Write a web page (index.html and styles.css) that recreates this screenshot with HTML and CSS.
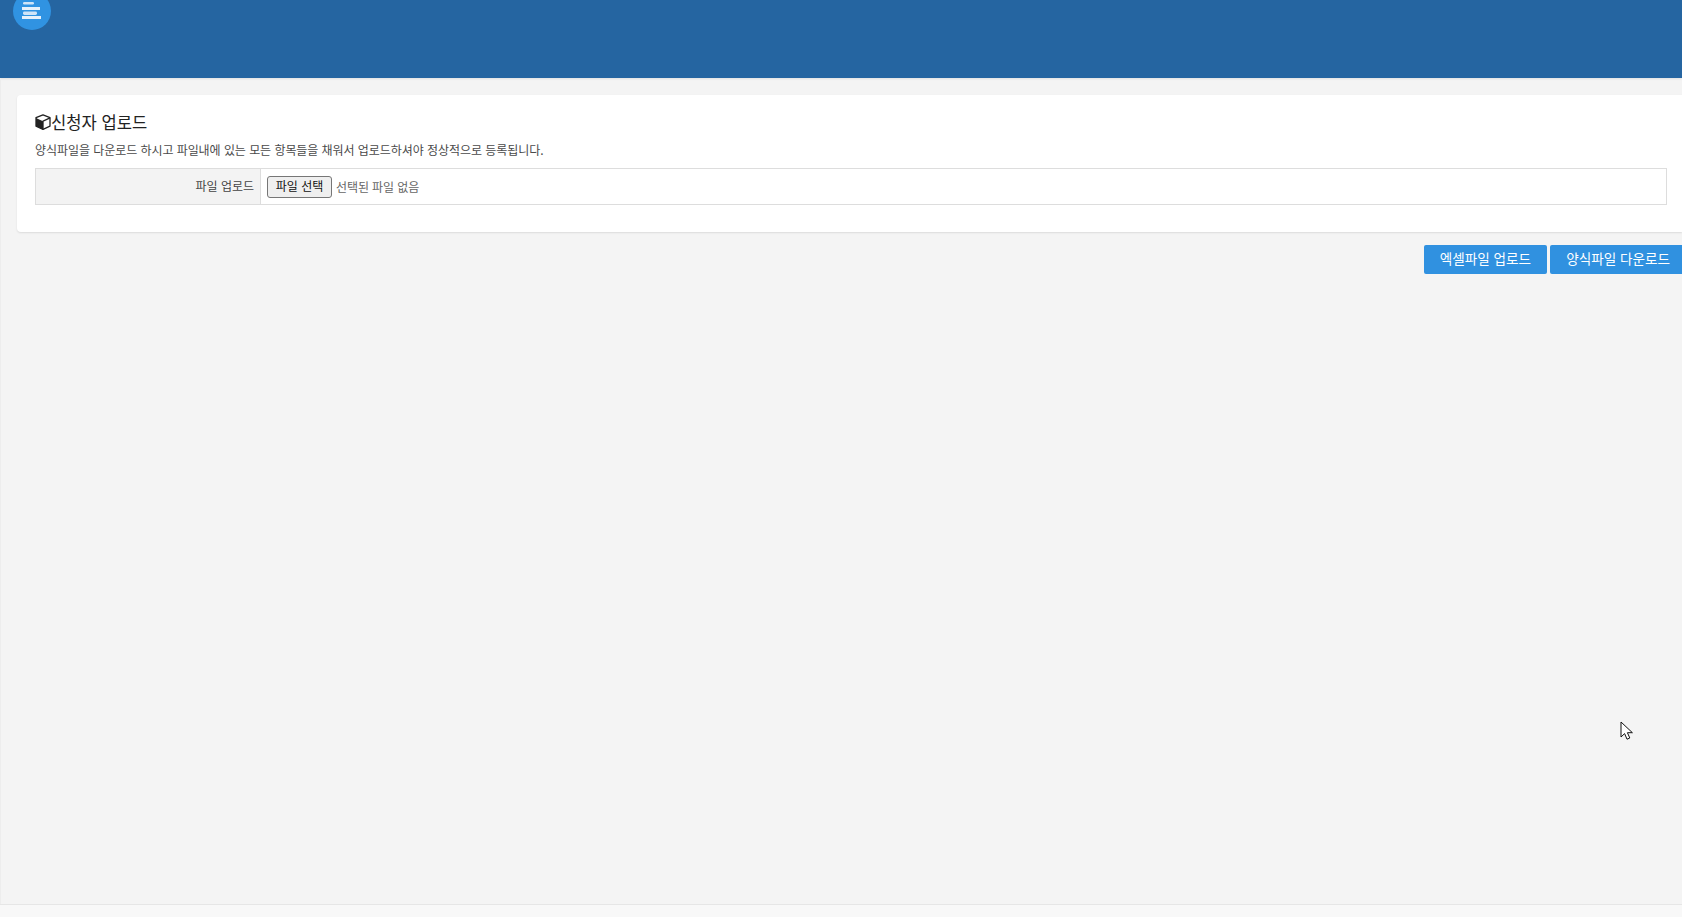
FILE: index.html
```html
<!DOCTYPE html>
<html lang="ko">
<head>
<meta charset="utf-8">
<title>신청자 업로드</title>
<link rel="stylesheet" href="styles.css">
</head>
<body>
<header class="topbar">
  <button class="menu-toggle" type="button" aria-label="메뉴">
    <svg class="menu-icon" viewBox="0 0 20 17" width="20" height="17" aria-hidden="true">
      <rect x="1" y="0" width="11" height="2.5" rx="1.2" fill="#cfe4f7"/>
      <rect x="0" y="5" width="18" height="3" fill="#e6f1fb"/>
      <rect x="1" y="9.5" width="14" height="3.5" rx="1.4" fill="#cfe4f7"/>
      <rect x="0" y="14" width="19" height="3" fill="#e6f1fb"/>
    </svg>
  </button>
</header>
<main class="content">
  <section class="card">
    <h1 class="card-title">
      <svg class="cube" viewBox="0 0 16 16" width="16" height="16" aria-hidden="true">
        <path d="M8 .8 15 3.6v8.6L8 15.4 1 12.2V3.6Z" fill="#fff" stroke="#222" stroke-width="1.3" stroke-linejoin="round"/>
        <path d="M8 7.2 1 3.9v8.3L8 15.4Z" fill="#222"/>
        <path d="M15 3.9 8 7.2v8.2" fill="none" stroke="#222" stroke-width="1.3"/>
      </svg>신청자 업로드
    </h1>
    <p class="card-desc">양식파일을 다운로드 하시고 파일내에 있는 모든 항목들을 채워서 업로드하셔야 정상적으로 등록됩니다.</p>
    <div class="form-row">
      <div class="form-label">파일 업로드</div>
      <div class="form-field">
        <button class="file-btn" type="button">파일 선택</button>
        <span class="file-name">선택된 파일 없음</span>
      </div>
    </div>
  </section>
  <div class="actions">
    <button class="action-btn" type="button">엑셀파일 업로드</button>
    <button class="action-btn" type="button">양식파일 다운로드</button>
  </div>
</main>
<footer class="footer"></footer>
<svg class="cursor" viewBox="0 0 13 20" width="13" height="20" aria-hidden="true">
  <path d="M1 1v15l3.6-3.4 2.4 5.6 2.8-1.2-2.4-5.3h5Z" fill="#fff" stroke="#111" stroke-width="1"/>
</svg>
</body>
</html>
```

FILE: styles.css
```css
* {
  box-sizing: border-box;
}

html,
body {
  margin: 0;
  height: 100%;
}

body {
  position: relative;
  display: flex;
  flex-direction: column;
  min-height: 917px;
  overflow: hidden;
  background: #f4f4f4;
  color: #222;
  font-family: "Noto Sans CJK KR", "Noto Sans", sans-serif;
}

.topbar {
  flex: none;
  height: 78px;
  padding-left: 13px;
  background: #2565a1;
  box-shadow: 0 1px 2px rgba(0, 0, 0, 0.08);
}

.menu-toggle {
  display: flex;
  align-items: center;
  justify-content: center;
  width: 38px;
  height: 38px;
  margin-top: -8px;
  padding: 0;
  border: 0;
  border-radius: 50%;
  background: #3093e2;
}

.menu-icon {
  display: block;
  margin-top: -1px;
}

.content {
  flex: 1;
  padding: 17px 0 0 16px;
  border-left: 1px solid #ededed;
}

.card {
  height: 137px;
  padding: 15px 15px 0 18px;
  border-radius: 4px 0 0 4px;
  background: #fff;
  box-shadow: 0 1px 2px rgba(0, 0, 0, 0.1);
}

.card-title {
  display: flex;
  align-items: center;
  height: 24px;
  margin: 0;
  font-size: 16.6px;
  font-weight: 400;
  color: #222;
}

.cube {
  flex: none;
}

.card-desc {
  height: 18px;
  margin: 7px 0 9px;
  font-size: 12px;
  letter-spacing: -0.06px;
  line-height: 18px;
  color: #4a4a4a;
}

.form-row {
  display: flex;
  height: 37px;
  border: 1px solid #ddd;
}

.form-label {
  flex: none;
  width: 225px;
  padding-right: 6px;
  border-right: 1px solid #ddd;
  background: #f3f3f3;
  font-size: 12px;
  line-height: 33px;
  text-align: right;
  color: #444;
}

.form-field {
  display: flex;
  align-items: center;
  padding-left: 6px;
  font-size: 12px;
}

.file-btn {
  width: 65px;
  height: 22px;
  padding: 0 0 2px;
  border: 1px solid #767676;
  border-radius: 3px;
  background: #efefef;
  font-family: inherit;
  font-size: 12px;
  color: #111;
}

.file-name {
  margin-left: 4px;
  letter-spacing: -0.1px;
  color: #666;
}

.actions {
  display: flex;
  justify-content: flex-end;
  gap: 3px;
  margin-top: 13px;
  margin-right: -4px;
}

.action-btn {
  height: 29px;
  padding: 0 16px 4px;
  border: 0;
  border-radius: 2px;
  background: #3091e0;
  font-family: inherit;
  font-size: 13.6px;
  color: #fff;
}

.footer {
  flex: none;
  height: 13px;
  border-top: 1px solid #e6e6e6;
  background: #f8f8f8;
}

.cursor {
  position: absolute;
  left: 1620px;
  top: 721px;
}
```
